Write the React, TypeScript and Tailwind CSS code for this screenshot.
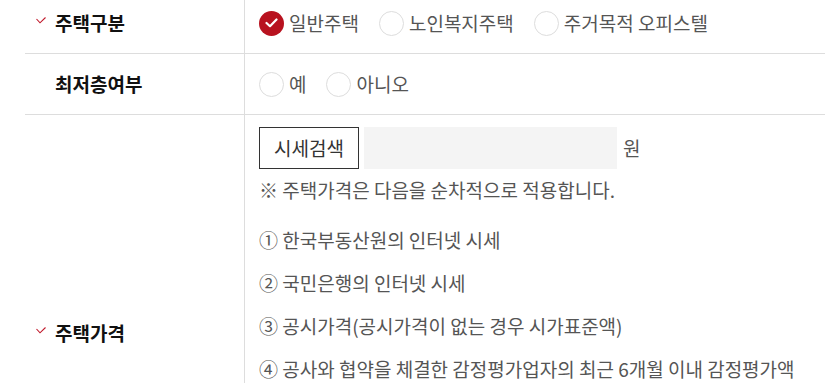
import React from "react";

const font = { fontFamily: '"Noto Sans CJK KR", "Noto Sans", sans-serif' };

function Check() {
  return (
    <svg width="10" height="7" viewBox="0 0 10 7" className="shrink-0">
      <polyline points="0.5,2 4,5.8 9.5,0.5" fill="none" stroke="#c0182a" strokeWidth="1.1" />
    </svg>
  );
}

function Label({ text, mark = true }: { text: string; mark?: boolean }) {
  return (
    <div className="w-[220px] shrink-0 flex items-center pl-[11px] gap-[9px] border-r border-[#dddddd]">
      <span className={mark ? "w-[10px] -mt-[5px]" : "w-[10px] invisible"}>
        <Check />
      </span>
      <span className="text-[19px] font-bold text-[#111111]">{text}</span>
    </div>
  );
}

function Radio({ label, checked = false }: { label: string; checked?: boolean }) {
  return (
    <label className="flex items-center gap-[5px] mr-[20px]">
      {checked ? (
        <span className="w-[25px] h-[25px] rounded-full bg-[#b8121f] flex items-center justify-center">
          <svg width="13" height="10" viewBox="0 0 13 10">
            <polyline points="1.5,5 5,8.2 11.5,1.5" fill="none" stroke="#ffffff" strokeWidth="2.2" strokeLinecap="round" strokeLinejoin="round" />
          </svg>
        </span>
      ) : (
        <span className="w-[25px] h-[25px] rounded-full border border-[#dddddd] bg-white" />
      )}
      <span className="text-[19px] text-[#555555]">{label}</span>
    </label>
  );
}

const rules = [
  "① 한국부동산원의 인터넷 시세",
  "② 국민은행의 인터넷 시세",
  "③ 공시가격(공시가격이 없는 경우 시가표준액)",
  "④ 공사와 협약을 체결한 감정평가업자의 최근 6개월 이내 감정평가액",
];

export default function App() {
  return (
    <div className="w-[825px] h-[383px] overflow-hidden bg-white" style={font}>
      <div className="-mt-[7px] ml-[25px]">
        {/* 주택구분 */}
        <div className="flex h-[61px] border-b border-[#dddddd]">
          <Label text="주택구분" />
          <div className="flex items-center pl-[14px]">
            <Radio label="일반주택" checked />
            <Radio label="노인복지주택" />
            <Radio label="주거목적 오피스텔" />
          </div>
        </div>

        {/* 최저층여부 */}
        <div className="flex h-[61px] border-b border-[#dddddd]">
          <Label text="최저층여부" mark={false} />
          <div className="flex items-center pl-[14px]">
            <Radio label="예" />
            <Radio label="아니오" />
          </div>
        </div>

        {/* 주택가격 */}
        <div className="flex min-h-[436px]">
          <Label text="주택가격" />
          <div className="pl-[14px] pt-[12px]">
            <div className="flex items-center">
              <button className="w-[100px] h-[42px] border border-[#333333] text-[19px] text-[#333333]">
                시세검색
              </button>
              <div className="w-[253px] h-[42px] bg-[#f4f4f4] ml-[5px]" />
              <span className="ml-[6px] text-[19px] text-[#555555]">원</span>
            </div>
            <p className="mt-[8px] text-[19px] leading-[26px] text-[#555555]">
              ※ 주택가격은 다음을 순차적으로 적용합니다.
            </p>
            <ul className="mt-[15px]">
              {rules.map((r) => (
                <li key={r} className="text-[19px] leading-[43px] text-[#555555]">
                  {r}
                </li>
              ))}
            </ul>
          </div>
        </div>
      </div>
    </div>
  );
}
